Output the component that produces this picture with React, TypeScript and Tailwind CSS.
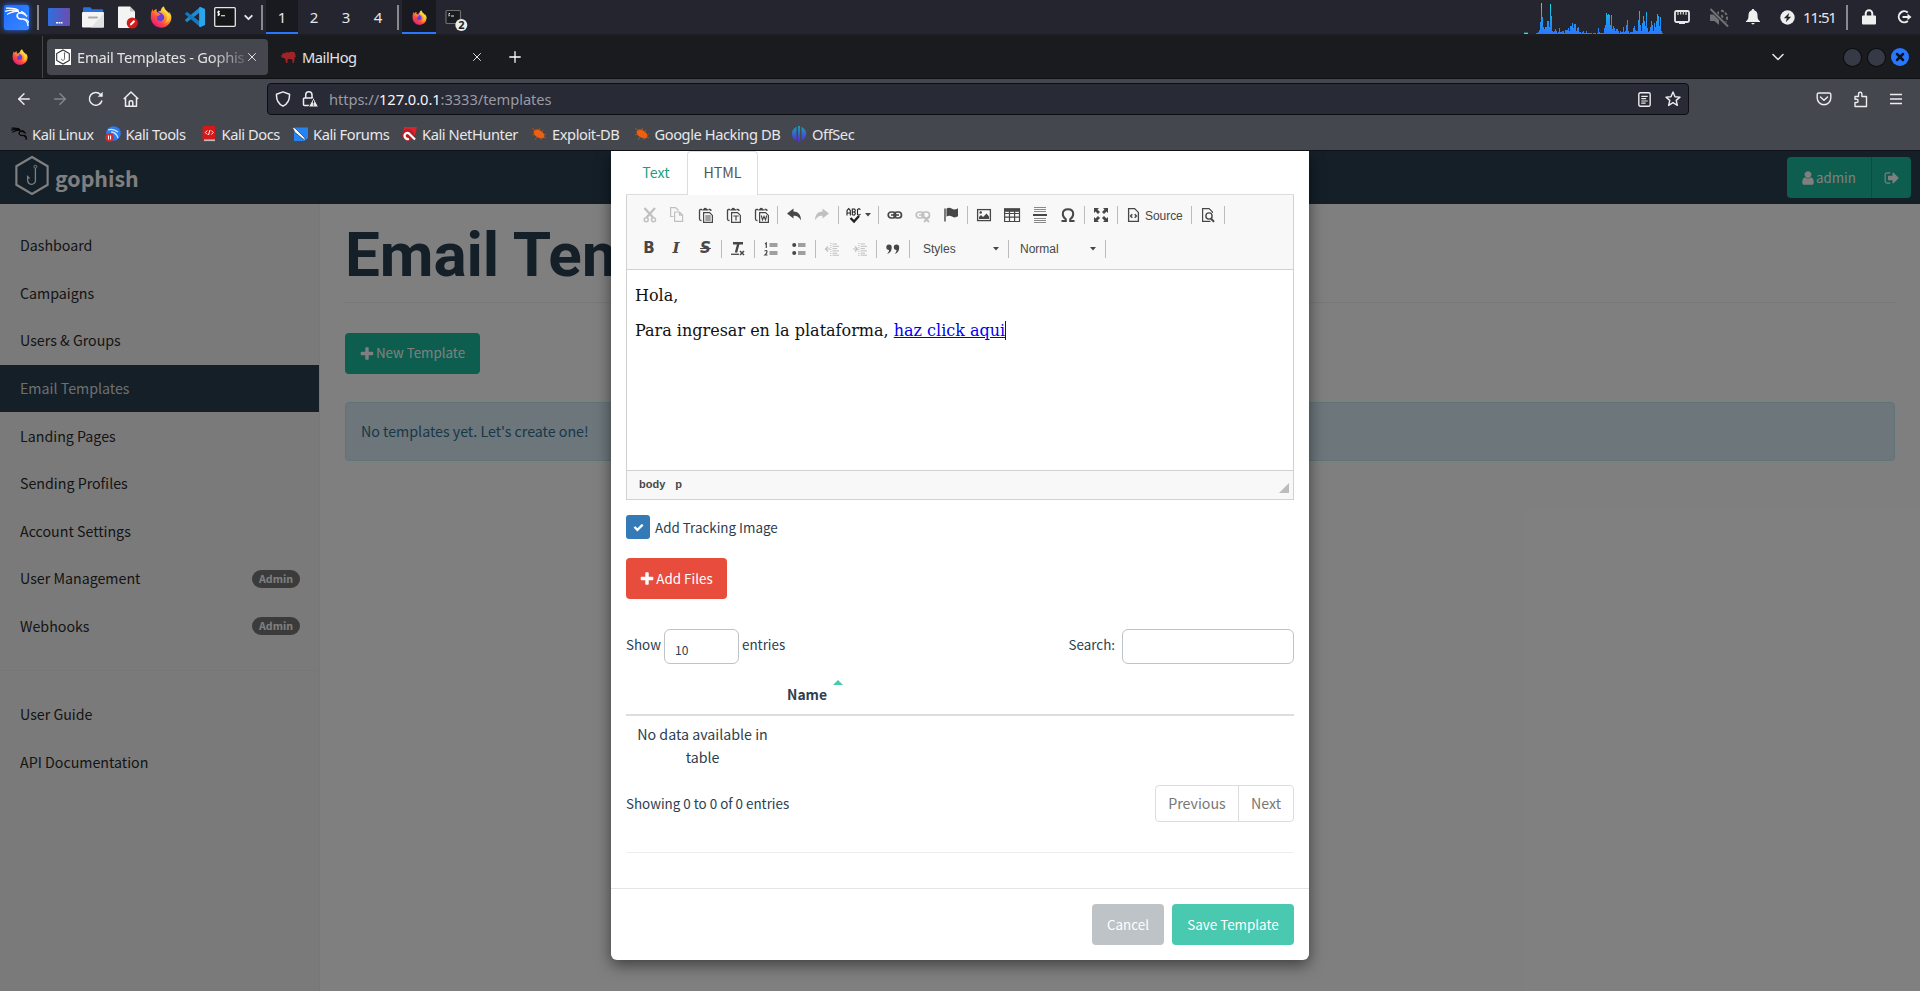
import React from 'react';
import { SiKalilinux } from 'react-icons/si';
import { ArrowLeft, ArrowRight, ChevronDown, Plus, X } from 'lucide-react';

type Kids = { children?: React.ReactNode };

const FA = {
  plus: 'M1600 736v192q0 40-28 68t-68 28h-416v416q0 40-28 68t-68 28h-192q-40 0-68-28t-28-68v-416h-416q-40 0-68-28t-28-68v-192q0-40 28-68t68-28h416v-416q0-40 28-68t68-28h192q40 0 68 28t28 68v416h416q40 0 68 28t28 68z',
  user: 'M1536 1399q0 109-62.5 187t-150.5 78h-854q-88 0-150.5-78t-62.5-187q0-85 8.5-160.5t31.5-152 58.5-131 94-89 134.5-34.5q131 128 313 128t313-128q76 0 134.5 34.5t94 89 58.5 131 31.5 152 8.5 160.5zm-256-887q0 159-112.5 271.5t-271.5 112.5-271.5-112.5-112.5-271.5 112.5-271.5 271.5-112.5 271.5 112.5 112.5 271.5z',
  out: 'M704 1440q0 4 1 20t.5 26.5-3 23.5-10 19.5-20.5 6.5h-320q-119 0-203.5-84.5t-84.5-203.5v-704q0-119 84.5-203.5t203.5-84.5h320q13 0 22.5 9.5t9.5 22.5q0 4 1 20t.5 26.5-3 23.5-10 19.5-20.5 6.5h-320q-66 0-113 47t-47 113v704q0 66 47 113t113 47h312l11.5 1 11.5 3 8 5.5 7 9 2 13.5zm928-544q0 26-19 45l-544 544q-19 19-45 19t-45-19-19-45v-288h-448q-26 0-45-19t-19-45v-384q0-26 19-45t45-19h448v-288q0-26 19-45t45-19 45 19l544 544q19 19 19 45z',
  check: 'M1671 566q0 40-28 68l-724 724-136 136q-28 28-68 28t-68-28l-136-136-362-362q-28-28-28-68t28-68l136-136q28-28 68-28t68 28l294 295 656-657q28-28 68-28t68 28l136 136q28 28 28 68z',
};
const Fa = ({ d, className }: { d: string; className: string }) => (
  <svg viewBox="0 0 1792 1792" fill="currentColor" className={`shrink-0 ${className}`}><path d={d} /></svg>
);

const Firefox = ({ id, className }: { id: string; className: string }) => (
  <svg viewBox="0 0 24 24" className={className}>
    <defs>
      <linearGradient id={id} x1="0.85" y1="0.1" x2="0.2" y2="0.95">
        <stop offset="0" stopColor="#fff44f" /><stop offset="0.35" stopColor="#ffa62d" />
        <stop offset="0.65" stopColor="#ff4f3a" /><stop offset="1" stopColor="#e31587" />
      </linearGradient>
    </defs>
    <circle cx="12" cy="12.5" r="7" fill="#6a3de0" />
    <path fill={`url(#${id})`} d="M22.6 9.2c-.5-1.3-1.6-2.6-2.4-3 .7 1.3 1 2.2 1 2.9C19.9 5.800 17 5 15.600 2.600 15.200 1.900 15 1.200 15 .4c-2.200 1.200-3.200 3.500-3.400 5-1 .1-2 .4-2.900.8.3.3 2.300.6 4.300 2 1.400 1 3.500 3.300 2 6.300-1.500 2.600-5.600 2.600-7 .5-.7-1.100-.6-2.600.7-3.200-.7-.1-1.500 0-2 .3.4-.8 1.300-1.500 2.800-1.400.5-.9 1.700-1.300 2-1.600.2-.4-1.600-.7-2.600-1.500-.5-.4-.8-.7-.9-.8-1.100-.6-1-2.400-.6-3.600C5 3.900 4 5 3.400 5.900 3 5 3 3.600 3.200 2.900 1.500 4.900.9 8.300.9 11.500.5 18 5.600 23.600 12 23.600c6.300 0 11-5 11.300-10.600.1-1.400-.1-2.600-.7-3.800z" />
    <path fill="#ffd83d" d="M15.500.8c-1.800 1.200-2.500 3-2.700 4.600 3 .6 6 3.400 6 7.300 0 3-1.700 5.300-4 6.300 5.500-.7 7.500-5.500 6.300-9.500C20 6 16 4.500 15.500.8z" opacity=".75" />
  </svg>
);

const Sep = () => <div className="h-[25px] w-[2px] shrink-0 bg-[#8a8a8e]" />;
const Slot = ({ className, children }: Kids & { className: string }) => (
  <div className={`flex h-full shrink-0 items-center justify-center ${className}`}>{children}</div>
);

const CPU = [
  1, 1, 2, 4, 12, 31, 17, 7, 5, 7, 7, 13, 13, 7, 30, 18, 3, 2, 3, 5, 3, 1, 2, 6, 2, 2, 3, 3, 1, 4, 4, 4, 6, 3, 8, 8, 11, 6, 10, 10, 3, 6, 7, 2, 2, 1, 2, 3, 1, 1, 3, 1, 1, 1, 1, 1, 0, 1, 1, 1, 0, 1, 6, 2, 1, 1, 1, 1, 6, 9, 21, 19, 20, 19, 9, 19, 5, 8, 6, 3, 5, 5, 3, 1, 3, 2, 2, 7, 2, 3, 9, 14, 3, 1, 2, 2, 2, 6, 8, 4, 3, 3, 14, 23, 9, 3, 11, 18, 13, 8, 22, 6, 2, 3, 7, 13, 9, 3, 11, 7, 13, 20, 18, 8, 17, 3, 1, 0,
];

function Panel() {
  return (
    <div className="flex h-9 shrink-0 items-center border-b-2 border-[#1c1d22] bg-[#24252e] text-[15px] text-[#e6e6ea]">
      <div className="ml-1 flex size-[25px] items-center justify-center rounded-[2px] bg-gradient-to-br from-[#1a6dff] to-[#3b86ff] shadow-[0_0_5px_#1f6cff]">
        <SiKalilinux className="size-[24px] text-white" stroke="currentColor" strokeWidth={0.9} />
      </div>
      <div className="ml-2"><Sep /></div>
      <Slot className="ml-[8px] w-[24px]">
        <svg viewBox="0 0 22 18" className="h-[18px] w-[22px]">
          <defs><linearGradient id="dsk" x1="0" x2="1"><stop stopColor="#2f6fe0" /><stop offset="1" stopColor="#6d4cae" /></linearGradient></defs>
          <rect width="22" height="18" rx="1" fill="url(#dsk)" /><path d="M8 14h2v1.500H8zm2.500 0h2v1.500h-2zm2.500 0h1.500v1.500H13z" fill="#fff" />
        </svg>
      </Slot>
      <Slot className="ml-[10px] w-[24px]">
        <svg viewBox="0 0 22 21" className="h-[21px] w-[22px]">
          <path d="M1 8V1.500C1 .7 1.500.3 2.200.3h6l2 2H20c.8 0 1.200.5 1.200 1.200V8z" fill="#2a6fdc" />
          <rect y="5" width="22" height="15.500" rx="1" fill="#f4f4f4" /><path d="M22 6v13.500c0 .6-.4 1-1 1H9z" fill="#e2e2e2" />
          <rect x="6" y="9.500" width="10" height="2" rx="1" fill="#a9a9a9" />
        </svg>
      </Slot>
      <Slot className="ml-[12px] w-[22px]">
        <svg viewBox="0 0 20 23" className="h-[23px] w-5">
          <path d="M0 1.500C0 .8.5.5 1 .5h11l5 5V21c0 .6-.4 1-1 1H1c-.6 0-1-.4-1-1z" fill="#f4f4f4" /><path d="M12 .5l5 5h-5z" fill="#c4c4c4" />
          <circle cx="14.300" cy="17" r="5.600" fill="#d41a1a" /><path d="M11.800 19.500l.6-2 3.400-3.400 1.400 1.400-3.400 3.400z" fill="#fff" />
        </svg>
      </Slot>
      <Slot className="ml-[11px] w-[22px]"><Firefox id="ff1" className="size-[22px]" /></Slot>
      <Slot className="ml-[11px] w-[23px]">
        <svg viewBox="0 0 24 24" className="size-[22px]">
          <path d="M17.500 1.200L.9 15.300l2.200 2.500L18 6.500z" fill="#1f8ad2" />
          <path d="M17.500 22.800L.9 8.700l2.200-2.500L18 17.500z" fill="#1079c0" />
          <path d="M17.500.8L23 3.300v17.400l-5.500 2.500-1-1V2z" fill="#2ba4ee" />
        </svg>
      </Slot>
      <Slot className="ml-2 w-[22px]">
        <svg viewBox="0 0 22 20" className="h-5 w-[22px]">
          <rect x=".7" y=".7" width="20.600" height="18.600" rx="1" fill="#151618" stroke="#e6e6e6" strokeWidth="1.300" />
          <path d="M5.800 4.500c-2-.6-2.800 1.200-1.300 1.700s1.300 2.200-1 1.700M4.700 3.500v5.500M7 8.800h4" fill="none" stroke="#fff" strokeWidth="1.100" />
        </svg>
      </Slot>
      <Slot className="ml-[5px] w-[14px]"><ChevronDown className="size-[13px]" strokeWidth={3.500} /></Slot>
      <div className="ml-[6px]"><Sep /></div>
      <div className="ml-[3px] flex h-full">
        <div className="flex w-8 items-center justify-center border-b-2 border-[#2777ff] bg-[#191a20]"><span className="mt-[2px]">1</span></div>
        {['2', '3', '4'].map((n) => <div key={n} className="flex w-8 items-center justify-center">{n}</div>)}
      </div>
      <div className="ml-[3px]"><Sep /></div>
      <div className="ml-[3px] flex h-full w-[34px] items-center justify-center border-b-2 border-[#2777ff] bg-[#191a20]"><Firefox id="ff2" className="mt-[2px] size-[15px]" /></div>
      <Slot className="ml-[9px] w-[24px]">
        <svg viewBox="0 0 24 30" className="h-[30px] w-6">
          <rect x="1" y="8.500" width="14.500" height="13" rx="1" fill="#1a1b1e" stroke="#6e6e70" strokeWidth="1.200" />
          <path d="M5 11.500c-1.500-.4-1.700.9-.9 1.200s.8 1.500-.8 1.100M6 14h3" fill="none" stroke="#fff" strokeWidth=".9" />
          <circle cx="16.300" cy="23" r="6" fill="#ececec" />
          <text x="16.300" y="27" textAnchor="middle" className="font-['Noto_Sans'] text-[11px] font-bold" fill="#222">2</text>
        </svg>
      </Slot>
      <div className="flex-1" />
      <svg viewBox="0 0 142 34" className="h-[34px] w-[142px]">
        <defs><linearGradient id="cpu" gradientUnits="userSpaceOnUse" x1="0" y1="2" x2="0" y2="34"><stop stopColor="#22e6dc" /><stop offset=".55" stopColor="#1f9bf0" /><stop offset="1" stopColor="#2a78ff" /></linearGradient></defs>
        <rect x="0" y="32" width="4" height="1" fill="#1c6a70" /><rect x="0" y="33" width="4" height="1" fill="#22e6dc" />
        {CPU.map((h, i) => <rect key={i} x={12 + i} y={34 - h} width="1" height={h} fill="url(#cpu)" />)}
      </svg>
      <Slot className="ml-[7px] w-[18px]">
        <svg viewBox="0 0 16 14" className="h-[14px] w-4"><rect x="1" y="1" width="14" height="11" rx="1.500" fill="none" stroke="#e8e8e8" strokeWidth="1.800" /><path d="M4 2v3M6.700 2v2.500M9.300 2v2.500M12 2v3" stroke="#e8e8e8" strokeWidth="1.100" /><path d="M5 11.500h6V14H5z" fill="#e8e8e8" /></svg>
      </Slot>
      <Slot className="ml-[17px] w-[22px]">
        <svg viewBox="0 0 20 20" className="mt-[2px] size-5 text-[#717176]" fill="none" stroke="currentColor" strokeWidth="2"><path d="M1 6.500h4.500L10 3v14l-4.500-4H1z" fill="currentColor" stroke="none" /><path d="M12.500 7q2 3 0 6M12 2.500q6 1.500 6 7.500 0 3-2 5" strokeDasharray="3 1.500" /><path d="M1.500 1L19 18.500" stroke="#24252e" strokeWidth="3.500" /><path d="M1.500 1L19 18.500" /></svg>
      </Slot>
      <Slot className="ml-[15px] w-4">
        <svg viewBox="0 0 14 16" className="h-[16px] w-[14px]" fill="#efefef"><path d="M7 0c.8 0 1.200.5 1.200 1.200C10.500 1.800 11.500 3.700 11.500 6c0 4 .8 5 2.500 6.200v.8H0v-.8C1.700 11 2.500 10 2.500 6c0-2.300 1-4.200 3.300-4.800C5.800.5 6.200 0 7 0zM5.300 14h3.400c-.3 1.900-3.100 1.900-3.400 0z" /></svg>
      </Slot>
      <Slot className="ml-[18px] w-4">
        <svg viewBox="0 0 15 15" className="size-[15px]"><circle cx="7.500" cy="7.500" r="7.200" fill="#efefef" /><path d="M9.300 2.800L3.800 8.200h3L5.800 12.200l5.400-5.400h-3z" fill="#24252e" /></svg>
      </Slot>
      <span className="ml-[8px] w-[33px] text-[15px] tracking-[-1.100px]">11:51</span>
      <div className="ml-[10px]"><Sep /></div>
      <Slot className="ml-[13px] w-4">
        <svg viewBox="0 0 14 16" className="h-4 w-[14px]"><path d="M3.700 8V4.500a3.300 3.300 0 016.600 0V8" fill="none" stroke="#efefef" strokeWidth="2" /><rect y="6.500" width="14" height="9" rx="1" fill="#efefef" /></svg>
      </Slot>
      <Slot className="ml-[19px] mr-[8px] w-4">
        <svg viewBox="0 0 15 14" className="h-[14px] w-[15px]" fill="none" stroke="#efefef" strokeWidth="2"><path d="M10.800 2.600A5.500 5.500 0 1010.800 11" /><path d="M5.500 7H12" /><path d="M10.500 3.800L14.500 7l-4 3.200z" fill="#efefef" stroke="none" /></svg>
      </Slot>
    </div>
  );
}

function TabBar() {
  return (
    <div className="flex h-[43px] shrink-0 items-center border-b border-[#0f1013] bg-[#1a1b1f] text-[14.670px] tracking-[-0.450px] text-[#e4e4e6]">
      <Slot className="w-[43px] border-r border-[#45464a] pr-[3px]"><Firefox id="ff3" className="size-4" /></Slot>
      <div className="ml-[4px] flex h-[36px] w-[221px] items-center rounded bg-[#44474e]">
        <svg viewBox="0 0 16 16" className="ml-2 size-4"><rect width="16" height="16" fill="#fff" /><path d="M8 1l6.300 3.500v7L8 15l-6.300-3.500v-7z" fill="none" stroke="#333" strokeWidth="1.100" /><path d="M9.500 4v5.500c0 2.500-3 2.500-3 .3M8.800 4h1.500" fill="none" stroke="#555" strokeWidth=".9" /></svg>
        <span className="ml-[6px] w-[167px] whitespace-nowrap tracking-[-0.230px] [mask-image:linear-gradient(to_right,#000_80%,transparent_106%)]">Email Templates - Gophis</span>
        <X className="ml-[1px] size-[14px]" strokeWidth={1.700} />
      </div>
      <svg viewBox="0 0 16 14" className="ml-[13px] h-[13px] w-[15px] text-[#a02427]" fill="currentColor"><path d="M0 5l1.500-1.500L2 2l1.800.6C5.500 1 7 1.500 8 1.500c2 0 3-.8 5-.5 1.800.2 2.500 1.500 2.500 3.500L16 7l-1.200-1-.3 3-.8 4h-1.500l.2-3-1.400-1.500H7.500L7 10l-.2 3H5.200l-.5-4L3 7.500.8 7z" /></svg>
      <span className="ml-[6px]">MailHog</span>
      <X className="ml-[113px] size-[14px]" strokeWidth={1.700} />
      <Plus className="ml-[22px] size-[18px] text-white" strokeWidth={1.700} />
      <div className="flex-1" />
      <ChevronDown className="mr-[56px] size-[20px]" strokeWidth={1.900} />
      <div className="mr-[7px] size-[17px] rounded-full bg-[#363a46] shadow-[0_0_0_1px_#0c0c0e]" />
      <div className="mr-[6px] size-[17px] rounded-full bg-[#363a46] shadow-[0_0_0_1px_#0c0c0e]" />
      <div className="mr-[11px] flex size-[18px] items-center justify-center rounded-full bg-[#2777ff]"><X className="size-[12px] text-[#111319]" strokeWidth={5} /></div>
    </div>
  );
}

function UrlBar() {
  return (
    <div className="flex h-[40px] shrink-0 items-center bg-[#44474e] text-[#ededef]">
      <ArrowLeft className="ml-[15px] size-[18px]" strokeWidth={1.900} />
      <ArrowRight className="ml-[18px] size-[18px] text-[#85878c]" strokeWidth={1.900} />
      <svg viewBox="0 0 16 16" className="ml-[19px] size-4" fill="none" stroke="currentColor" strokeWidth="1.500"><path d="M14 9.500A6.400 6.400 0 1112.500 3.500L14 5" /><path d="M14.700.8v5h-5z" fill="currentColor" stroke="none" /></svg>
      <svg viewBox="0 0 16 16" className="ml-[19px] size-4" fill="none" stroke="currentColor" strokeWidth="1.500" strokeLinejoin="round"><path d="M.8 8L8 1l7.200 7M2.500 7v8.200h11V7" /><path d="M6.200 15v-3.500c0-2.200 3.600-2.200 3.600 0V15" /></svg>
      <div className="ml-[128px] flex h-8 w-[1422px] items-center rounded-[4px] border border-[#0d0e12] bg-[#282a36]">
        <svg viewBox="0 0 16 16" className="ml-[7px] size-4" fill="none" stroke="currentColor" strokeWidth="1.500" strokeLinejoin="round"><path d="M8 .9l6.500 2.300C14.800 9 12.500 13 8 15.200 3.500 13 1.200 9 1.500 3.200z" /></svg>
        <svg viewBox="0 0 17 17" className="ml-[11px] size-[17px]" fill="none" stroke="currentColor" strokeWidth="1.500"><path d="M8 14.500H2.500a1 1 0 01-1-1V8a1 1 0 011-1h9M3.700 7V4a3 3 0 016.300 0v3" /><path d="M11.500 6.500l5 9.500h-10z" fill="#ededef" stroke="#282a36" strokeWidth="1" /><path d="M11.500 9.500v3M11.500 13.500v1" stroke="#282a36" strokeWidth="1.200" /></svg>
        <span className="ml-[10px] text-[14.670px] tracking-[-0.060px] text-[#9a9ba1]">https://<span className="text-[#f5f5f7]">127.0.0.1</span>:3333/templates</span>
        <div className="flex-1" />
        <svg viewBox="0 0 12 14" className="h-[15px] w-[13px]" fill="none" stroke="currentColor" strokeWidth="1.300"><rect x=".7" y=".7" width="10.600" height="12.600" rx="1.300" /><path d="M3 4h6M3 6.200h4.500M3 8.400h6M3 10.400h4" strokeWidth="1.100" /></svg>
        <svg viewBox="0 0 16 16" className="ml-[14px] mr-[7px] size-4" fill="none" stroke="currentColor" strokeWidth="1.400" strokeLinejoin="round"><path d="M8 1l2 4.700 5 .4-3.800 3.300 1.200 5L8 11.700l-4.400 2.700 1.200-5L1 6.100l5-.4z" /></svg>
      </div>
      <div className="flex-1" />
      <svg viewBox="0 0 16 16" className="size-4" fill="none" stroke="currentColor" strokeWidth="1.400" strokeLinejoin="round"><path d="M2.500 2h11a1.300 1.300 0 011.300 1.300V7a6.800 6.800 0 01-13.600 0V3.300A1.300 1.300 0 012.500 2z" /><path d="M4.500 6L8 9.300 11.500 6" strokeLinecap="round" /></svg>
      <svg viewBox="0 0 16 17" className="ml-[21px] h-[17px] w-4" fill="none" stroke="currentColor" strokeWidth="1.400" strokeLinejoin="round"><path d="M2 5.500h3.500V3a1.700 1.700 0 013.400 0v2.500h4.600V15.500H2V11.500h1.500a1.600 1.600 0 000-3.200H2z" /></svg>
      <svg viewBox="0 0 14 12" className="ml-[20px] mr-[17px] h-[12px] w-[14px]" stroke="currentColor" strokeWidth="1.400"><path d="M1 1.500h12M1 6h12M1 10.500h12" /></svg>
    </div>
  );
}

const Exploit = () => (
  <svg viewBox="0 0 16 16" className="size-4" fill="#ee5f12"><ellipse cx="8" cy="8" rx="6" ry="3.600" transform="rotate(32 8 8)" /><path d="M1 2l4 3M8 2l1 3M12 4l-1 2M1 9l3-1M4 14l2-3M10 14l0-3M15 12l-2-1M15 8l-2 1" stroke="#b5561f" strokeWidth=".8" /></svg>
);
const BOOKMARKS: { label: string; w: string; icon: React.ReactNode }[] = [
  { label: 'Kali Linux', w: 'w-[93.500px]', icon: <SiKalilinux className="size-4 text-black" stroke="currentColor" strokeWidth={1} /> },
  { label: 'Kali Tools', w: 'w-[96px]', icon: <svg viewBox="0 0 16 16" className="size-4"><circle cx="8.500" cy="7.500" r="7.300" fill="#2b7bf2" /><path d="M3 4q5-2 10 2M6 6q5 0 7 6" stroke="#cfe4ff" fill="none" strokeWidth="1.300" /><circle cx="4.500" cy="11.500" r="4.300" fill="#d62a2a" /><path d="M3.500 9.500v4M5.600 9.500v4" stroke="#fff" /></svg> },
  { label: 'Kali Docs', w: 'w-[91.500px]', icon: <svg viewBox="0 0 16 16" className="size-4"><path d="M3 0h11v13H3a1 1 0 000 2h11v1H3a2 2 0 01-1.500-1.500V1.500A1.500 1.500 0 013 0z" fill="#d31a1a" /><path d="M3 13.500h11v1.300H3z" fill="#ddd" /><path d="M6.300 4.500l-2 2 2 2M10.300 4.500l2 2-2 2M9 4l-1.500 5" stroke="#fff" fill="none" /></svg> },
  { label: 'Kali Forums', w: 'w-[109px]', icon: <svg viewBox="0 0 16 16" className="size-4"><path d="M2 1.500h14V12L13 15H2z" fill="#2383f0" /><path d="M0 1l3 1 9 9 2.500 4L11 13 3 6.500z" fill="#f5f5f5" stroke="#223" strokeWidth=".6" /></svg> },
  { label: 'Kali NetHunter', w: 'w-[130px]', icon: <svg viewBox="0 0 16 16" className="size-4"><path d="M3 1h13l-2 8H2z" fill="#d9232e" /><circle cx="7" cy="9" r="6" fill="#b81c25" /><path d="M14 13.500L8 7.500c-2-1.500-4.500 0-4.500 2.300S6 13.500 8 13" stroke="#fff" strokeWidth="2.300" fill="none" /></svg> },
  { label: 'Exploit-DB', w: 'w-[102.500px]', icon: <Exploit /> },
  { label: 'Google Hacking DB', w: 'w-[157.500px]', icon: <Exploit /> },
  { label: 'OffSec', w: 'w-[90px]', icon: <svg viewBox="0 0 16 16" className="size-4"><defs><linearGradient id="os" x1="0" x2="0" y1="0" y2="1"><stop stopColor="#14a5b5" /><stop offset="1" stopColor="#5a25e0" /></linearGradient></defs><path d="M5.500.8v14.200C-.3 12-1.200 4.500 5.500.8zM10.500.8v14.200c5.800-3 6.700-10.500 0-14.200zM7 0h2v16H7z" fill="url(#os)" /></svg> },
];

function Bookmarks() {
  return (
    <div className="flex h-[32px] shrink-0 items-center border-b border-[#101116] bg-[#44474e] pb-px pl-[11px] text-[14.670px] tracking-[-0.430px] text-[#e8e8ea]">
      {BOOKMARKS.map((b) => <div key={b.label} className={`flex shrink-0 items-center gap-[5px] whitespace-nowrap ${b.w}`}>{b.icon}{b.label}</div>)}
    </div>
  );
}

const NAV = ['Dashboard', 'Campaigns', 'Users & Groups', 'Email Templates', 'Landing Pages', 'Sending Profiles', 'Account Settings', 'User Management', 'Webhooks'];
function NavItem({ label }: { label: string }) {
  const active = label === 'Email Templates';
  return (
    <li className={`flex h-[47.550px] items-center justify-between pl-[20px] pr-[19px] ${active ? 'bg-[#283f50] text-[#dedede]' : 'text-[#2b2b2b]'}`}>
      <span className="mb-[1.500px]">{label}</span>
      {(label === 'User Management' || label === 'Webhooks') && <span className="flex h-[18px] w-12 items-center justify-center rounded-[10px] bg-[#777] text-[10.640px] font-bold text-white">Admin</span>}
    </li>
  );
}

function Page() {
  return (
    <div className="flex h-full flex-col bg-white">
      <header className="flex h-[53px] shrink-0 items-center bg-[#283f50] text-white">
        <svg viewBox="0 0 36 42" className="mb-[4px] ml-[14px] h-[41px] w-[36px]" fill="none" stroke="#fff"><path d="M18 2l16 9.500v19L18 40 2 30.500v-19z" strokeWidth="2.200" /><circle cx="21.500" cy="12" r="1.500" /><path d="M21.500 13.500V26c0 5.500-8 5.500-8-1v-3l2 2" strokeWidth="1.300" /></svg>
        <span className="ml-[5px] text-[21.300px] font-bold">gophish</span>
        <div className="flex-1" />
        <div className="mr-[9px] flex h-[41px] items-center rounded bg-[#1abc9c] text-[13.300px]">
          <span className="flex h-full w-[85px] items-center border-r border-[#169c82] pl-[13px]"><Fa d={FA.user} className="size-4" />admin</span>
          <span className="flex w-[39px] justify-center"><Fa d={FA.out} className="size-4" /></span>
        </div>
      </header>
      <div className="flex min-h-0 flex-1 text-[14.230px]">
        <aside className="w-[320px] shrink-0 border-r border-[#eee] bg-[#f5f5f5] pt-[18px]">
          <ul>{NAV.map((n) => <NavItem key={n} label={n} />)}</ul>
          <div className="my-[20px] h-px bg-[#eee]" />
          <ul><NavItem label="User Guide" /><NavItem label="API Documentation" /></ul>
        </aside>
        <main className="min-w-0 flex-1 pl-[25px] pr-[25px]">
          <h1 className="flex h-[99px] items-center border-b border-[#eee] pt-[4px] font-['Roboto'] text-[62px] font-bold leading-none tracking-[-0.100px] text-[#283f50]">Email Templates</h1>
          <button className="mt-[30px] flex h-[41px] w-[135px] items-center justify-center rounded bg-[#1abc9c] text-[13.350px] text-white"><Fa d={FA.plus} className="-ml-px mr-px size-4" />New Template</button>
          <div className="mt-[28px] flex h-[59px] items-center rounded border border-[#bce8f1] bg-[#d9edf7] pb-[1px] pl-[15px] text-[#31708f]">No templates yet. Let's create one!</div>
        </main>
      </div>
    </div>
  );
}

const Glyph = ({ children, dim, w = 'w-7' }: Kids & { dim?: boolean; w?: string }) => (
  <span className={`flex shrink-0 items-center justify-center ${w} ${dim ? 'text-[#c0c0c0]' : 'text-[#474747]'}`}>
    <svg viewBox="0 0 16 16" className="size-4 overflow-visible" fill="none" stroke="currentColor" strokeWidth="1.200">{children}</svg>
  </span>
);
const Bar = () => <span className="mx-[2px] h-[18px] w-px shrink-0 bg-[#bcbcbc]" />;
const Caret = () => <svg viewBox="0 0 6 4" className="h-[4px] w-[6px]"><path d="M0 0h6L3 3.500z" fill="#474747" /></svg>;
const Clip = () => <><path d="M4 2.500H2.500q-1 0-1 1V12q0 1.500 1.500 1.500h.5M10.500 2.500H12q1 0 1 1.500" strokeWidth="1.300" /><path d="M4 3.500q0-1.500 1.500-1.500Q6 .7 7.200.7T9 2q1.500 0 1.500 1.500z" fill="currentColor" stroke="none" /><path d="M5.600 5.600h6l2.800 2.800v6.900H5.600z" fill="#f8f8f8" strokeWidth="1.200" /></>;

function Toolbar() {
  return (
    <div className="flex h-[75px] flex-col border-b border-[#d1d1d1] bg-[#f8f8f8] pl-[8px] pt-[6px] text-[#474747]">
      <div className="flex h-[27px] items-center">
        <span className="flex w-[140px] shrink-0 pl-px">
          <Glyph dim><path d="M2.500 1l8.500 9.500M13 1L4.500 10.500" strokeWidth="2.300" /><circle cx="4.200" cy="12.700" r="2" strokeWidth="1.500" /><circle cx="11.500" cy="12.700" r="2" strokeWidth="1.500" /></Glyph>
          <Glyph dim><path d="M3.500 9.500H.6V.6h4.900L8.500 3.500" /><path d="M4.600 5h5l3 3v6.400h-8zM9.500 5v3.200h3" /></Glyph>
          <Glyph><Clip /><path d="M7.300 9h5.400M7.300 11h5.400M7.300 13h5.400" strokeWidth="1" /></Glyph>
          <Glyph><Clip /><path d="M7.300 9h5.400M10 9v4.500" strokeWidth="1.200" /></Glyph>
          <Glyph><Clip /><path d="M7.300 8.500l1.200 4.300L10 9.500l1.500 3.300 1.200-4.300" strokeWidth="1.200" /></Glyph>
        </span>
        <Bar />
        <Glyph><path d="M1 6.500L7.500 1.500V4.500C12 4.500 15 7.500 15 13.500 13 10 11 8.800 7.500 8.800V11.500z" fill="currentColor" stroke="none" /></Glyph>
        <Glyph dim><path d="M15 6.500L8.500 1.500V4.500C4 4.500 1 7.500 1 13.500 3 10 5 8.800 8.500 8.800V11.500z" fill="currentColor" stroke="none" /></Glyph>
        <Bar />
        <span className="flex w-[35px] shrink-0 items-center justify-center gap-[3px]">
          <svg viewBox="0 0 16 16" className="size-4 overflow-visible" fill="none" stroke="#222" strokeWidth="1.100"><path d="M1 8.500V3.500L2.700 1.600 4.300 3.500V8.500M1 6h3.300M6.300 8V2H8.500q1.500 1.500 0 3H6.300M8.500 5q1.500 1.500 0 3H6.300M14.500 2.600L13 1.700l-1.500.8v5l1.500.7 1.500-.9" /><path d="M4.500 11l3.500 3.500L13 9" strokeWidth="2.400" /></svg>
          <Caret />
        </span>
        <Bar />
        <Glyph><rect x="1.200" y="5" width="7.500" height="6" rx="3" strokeWidth="1.700" /><rect x="7" y="5" width="7.500" height="6" rx="3" strokeWidth="1.700" /><path d="M4 8h8" strokeWidth="1.500" /></Glyph>
        <Glyph dim><rect x="1.200" y="5" width="7.500" height="6" rx="3" strokeWidth="1.700" /><rect x="7" y="5" width="7.500" height="6" rx="3" strokeWidth="1.700" /><path d="M4 8h5" strokeWidth="1.500" /><path d="M9 10l5 5M14 10l-5 5" strokeWidth="1.800" /></Glyph>
        <Glyph><path d="M2 1.500v13" strokeWidth="1.400" /><path d="M3.500 1.500q3-1.500 5.500.3t6-.5v8q-3.500 2-6 .3t-5.500 0z" fill="currentColor" stroke="none" /></Glyph>
        <Bar />
        <Glyph><rect x="1.600" y="2.600" width="12.800" height="11" strokeWidth="1.300" /><circle cx="4.700" cy="5.500" r="1.300" fill="currentColor" stroke="none" /><path d="M3 12V10l2-2 2 2 3.500-3.500L13 9.500V12z" fill="currentColor" stroke="none" /></Glyph>
        <Glyph><path d="M.6 2h14.900v12.500H.6zM.6 10.200h14.900M5.500 4v10.500M10.600 4v10.500M.6 6.500h14.900" strokeWidth="1.200" /><path d="M0 1.300h16v3.500H0z" fill="currentColor" stroke="none" /></Glyph>
        <Glyph><path d="M2 .5h12M2 2.500h12M2 4.500h12M2 11.500h12M2 13.500h12M2 15.500h12" stroke="#8a8a8a" strokeWidth="1" /><path d="M1 8h14" strokeWidth="2" /></Glyph>
        <Glyph><path d="M1.500 14h4.300v-1.800Q2.800 10 2.800 7 2.800 2.300 8 2.300T13.200 7q0 3-3 5.200V14h4.300" strokeWidth="2" /></Glyph>
        <Bar />
        <Glyph><path d="M1 1h5L4.500 2.500 7 5 5 7 2.500 4.500 1 6zM15 1v5l-1.500-1.500L11 7 9 5l2.500-2.500L10 1zM1 15v-5l1.500 1.500L5 9l2 2-2.500 2.500L6 15zM15 15h-5l1.500-1.500L9 11l2-2 2.500 2.500L15 10z" fill="currentColor" stroke="none" /></Glyph>
        <Bar />
        <span className="flex w-[69px] shrink-0 items-center pl-[5px]">
          <svg viewBox="0 0 16 16" className="size-4" fill="none" stroke="currentColor" strokeWidth="1.300"><path d="M3.600 1.600h6l3.800 3.800v9H3.600z" /><path d="M7.300 7.200L5.600 9l1.700 1.800M9.700 7.200L11.400 9l-1.700 1.800" strokeWidth="1.500" /></svg>
          <span className="ml-[4px] mt-[2px] font-['Liberation_Sans'] text-[12px] tracking-[-0.050px]">Source</span>
        </span>
        <Bar />
        <Glyph><path d="M10.500 14.400H2.600V1.600h6.500l3.300 3.300V6" /><circle cx="9" cy="9" r="3.100" strokeWidth="1.400" /><path d="M11 11.500l3 3.300" strokeWidth="2" /></Glyph>
        <Bar />
      </div>
      <div className="mt-[7px] flex h-[27px] items-center font-['Liberation_Sans'] text-[12px]">
        <span className="w-7 text-center font-['DejaVu_Sans'] text-[15px] font-bold">B</span>
        <span className="w-7 pr-[2px] text-center font-['DejaVu_Serif'] text-[15px] font-bold italic">I</span>
        <span className="w-7 pl-[1px] text-center font-['DejaVu_Sans'] text-[15px] font-bold italic line-through decoration-1">S</span>
        <Bar />
        <Glyph><path d="M3 2.200h10M8.500 2.200L6 11.500" strokeWidth="2.400" /><path d="M1 13.300h8" strokeWidth="1.300" /><path d="M10 10l4 4M14 10l-4 4" strokeWidth="1.500" /></Glyph>
        <Bar />
        <Glyph><path d="M6.500 3H14.500M6.500 5H14.500M6.500 11H14.500M6.500 13H14.500" strokeWidth="1.100" /><path d="M2 3l1.300-1v5M1.500 10q2.500-1.200 2.500.5T2 14h2.500" strokeWidth="1.200" /></Glyph>
        <Glyph><circle cx="3.200" cy="4" r="2" fill="currentColor" stroke="none" /><circle cx="3.200" cy="12" r="2" fill="currentColor" stroke="none" /><path d="M7 3H14.500M7 5H14.500M7 11H14.500M7 13H14.500" strokeWidth="1.100" /></Glyph>
        <Bar />
        <Glyph dim><path d="M8.500 3H13M8.500 5.300H15M8.500 7.600H13M8.500 9.900H15M8.500 12.200H13M8.500 14.200H15" strokeWidth="1" /><path d="M6.800 2v13" strokeDasharray="1 1" /><path d="M6 8H2M4 5.500L1.500 8 4 10.500" /></Glyph>
        <Glyph dim><path d="M8.500 3H13M8.500 5.300H15M8.500 7.600H13M8.500 9.900H15M8.500 12.200H13M8.500 14.200H15" strokeWidth="1" /><path d="M6.800 2v13" strokeDasharray="1 1" /><path d="M1 8h4M3 5.500L5.500 8 3 10.500" /></Glyph>
        <Bar />
        <Glyph><path d="M4 3.500a2.700 2.700 0 012.700 2.700C6.700 9.500 5.500 12 2 13c1.500-1.500 2-2.500 2-4.100A2.700 2.700 0 014 3.500zM11.500 3.500a2.700 2.700 0 012.700 2.700c0 3.300-1.200 5.800-4.700 6.800 1.500-1.500 2-2.500 2-4.100a2.700 2.700 0 010-5.400z" fill="currentColor" stroke="none" /></Glyph>
        <Bar />
        <span className="flex w-[94px] items-center justify-between pl-[11px] pr-[7px] pt-px">Styles<Caret /></span>
        <Bar />
        <span className="flex w-[92px] items-center justify-between pl-[9px] pr-[7px] pt-px">Normal<Caret /></span>
        <Bar />
      </div>
    </div>
  );
}

function Modal() {
  return (
    <div className="flex h-[809px] w-[698px] flex-col rounded-b-[6px] bg-white px-[15px] text-[13.400px] text-[#2c3e50] shadow-[0_5px_15px_rgba(0,0,0,0.5)]">
      <div className="flex h-[44px] shrink-0 border-b border-[#ddd] text-[14.230px]">
        <div className="flex w-[60px] items-center justify-center pb-[2px] text-[#1a9f85]">Text</div>
        <div className="-mb-px ml-px flex w-[71px] items-center justify-center rounded-t border-x border-t border-[#ddd] bg-white pb-[4px] text-[#555]">HTML</div>
      </div>
      <div className="flex h-[305px] shrink-0 flex-col border border-t-0 border-[#d1d1d1]">
        <Toolbar />
        <div className="flex-1 pl-[8px] pt-[13px] font-['DejaVu_Serif'] text-[16px] leading-[25px] text-[#111]">
          <p>Hola,</p>
          <p className="mt-[10px] flex items-center">Para ingresar en la plataforma,&nbsp;<span className="text-[#0000ee] underline">haz click aqui</span><span className="h-[19px] w-px bg-[#0000ee]" /></p>
        </div>
        <div className="flex h-[29px] items-center justify-between border-t border-[#d1d1d1] bg-[#f8f8f8] pl-[12px] pr-[4px] font-['Liberation_Sans'] text-[11px] font-bold text-[#484848]">
          <span className="mb-[2px]">body<span className="ml-[10px]">p</span></span>
          <svg viewBox="0 0 10 10" className="mt-[6px] size-[10px]"><path d="M10 0v10H0z" fill="#bcbcbc" /></svg>
        </div>
      </div>
      <div className="mt-[15px] flex h-6 shrink-0 items-center">
        <span className="flex size-6 items-center justify-center rounded-[3px] bg-[#337ab7] text-white"><Fa d={FA.check} className="mt-px size-[11px]" /></span>
        <span className="ml-[5px]">Add Tracking Image</span>
      </div>
      <button className="mt-[19px] flex h-[41px] w-[101px] shrink-0 items-center justify-center rounded bg-[#e74c3c] text-white"><Fa d={FA.plus} className="-ml-px mr-px size-4" />Add Files</button>
      <div className="mt-[30px] flex h-[35px] shrink-0 items-center justify-between">
        <span className="flex items-center"><span className="mb-[4px] w-[38px]">Show</span><span className="flex h-[35px] w-[75px] items-center rounded-[6px] border border-[#bdc3c7] pl-[10px] pt-[6px] text-[12px]">10</span><span className="mb-[4px] ml-[3px]">entries</span></span>
        <span className="flex items-center"><span className="mb-[4px]">Search:</span><span className="ml-[7px] h-[35px] w-[172px] rounded-[6px] border border-[#bdc3c7]" /></span>
      </div>
      <div className="mt-[14px] flex h-[38px] shrink-0 border-b-2 border-[#ddd] pl-[161px] text-[13.860px] font-bold">
        <span className="mt-[6px]">Name</span>
        <svg viewBox="0 0 10 5" className="ml-[6px] mt-[2px] h-[5px] w-[10px]"><path d="M5 0l5 5H0z" fill="#48c9b0" /></svg>
      </div>
      <p className="mt-[6px] h-[46px] w-[153px] shrink-0 text-center text-[14.230px] leading-[23px]">No data available in<br />table</p>
      <div className="mt-[17px] flex h-[37px] shrink-0 items-center justify-between">
        <span>Showing 0 to 0 of 0 entries</span>
        <span className="flex h-[37px] rounded border border-[#ddd] text-[14.230px] text-[#777]"><span className="flex w-[83px] items-center justify-center border-r border-[#ddd] pb-[2px]">Previous</span><span className="flex w-[54px] items-center justify-center pb-[2px]">Next</span></span>
      </div>
      <div className="mt-[30px] h-px shrink-0 bg-[#eee]" />
      <div className="-mx-[15px] mt-[35px] flex flex-1 justify-end gap-2 border-t border-[#e5e5e5] px-[15px] pt-[15px] text-white">
        <button className="h-[41px] w-[72px] rounded bg-[#bdc3c7]">Cancel</button>
        <button className="h-[41px] w-[122px] rounded bg-[#48c9b0]">Save Template</button>
      </div>
    </div>
  );
}

export default function App() {
  return (
    <div className="flex h-[991px] w-[1920px] flex-col overflow-hidden font-['Noto_Sans',sans-serif]">
      <Panel />
      <TabBar />
      <UrlBar />
      <Bookmarks />
      <div className="relative min-h-0 flex-1 overflow-hidden font-['Noto_Sans_CJK_SC',sans-serif]">
        <Page />
        <div className="absolute inset-0 flex items-start justify-center bg-black/50"><Modal /></div>
      </div>
    </div>
  );
}
